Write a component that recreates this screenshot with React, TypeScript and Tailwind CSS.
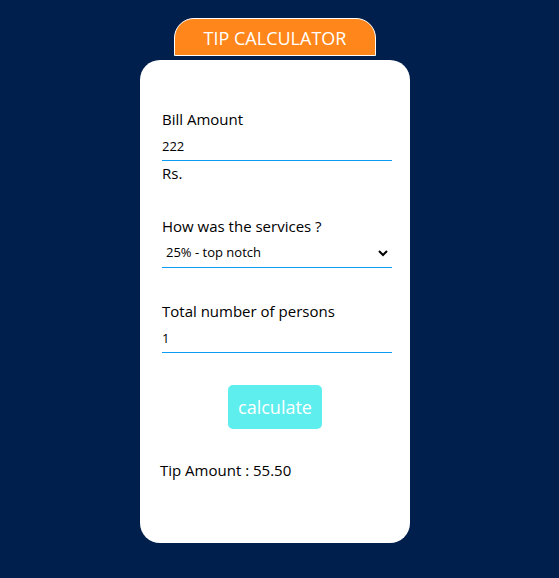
import { useState } from "react";
import type { FormEvent } from "react";

const font = "font-['Open_Sans','Noto_Sans',sans-serif]";
const field =
  "block h-[29px] w-full rounded-none border-0 border-b border-[#0a9bf5] bg-white text-[13px] text-black outline-none";
const label = "block text-[15px] leading-[25px]";

export default function App() {
  const [bill, setBill] = useState("222");
  const [rate, setRate] = useState("0.25");
  const [people, setPeople] = useState("1");
  const [tip, setTip] = useState("55.50");

  const calculate = (event: FormEvent) => {
    event.preventDefault();
    const share = (Number(bill) * Number(rate)) / Math.max(1, Number(people));
    setTip(share.toFixed(2));
  };

  return (
    <main className={`flex min-h-screen flex-col items-center bg-[#001f4d] pt-[18px] pr-[9px] pb-8 text-black ${font}`}>
      <h1 className="mb-1 flex h-[38px] w-[202px] items-center justify-center rounded-t-[20px] border border-white bg-[#ff861a] pt-0.5 text-lg font-normal text-white">
        TIP CALCULATOR
      </h1>
      <form
        onSubmit={calculate}
        className="flex w-[270px] flex-col rounded-[20px] bg-white px-5 pt-[47px] pb-15"
      >
        <div className="ml-0.5 -mr-0.5">
          <label htmlFor="bill" className={label}>Bill Amount</label>
          <input id="bill" inputMode="decimal" className={field} value={bill} onChange={(e) => setBill(e.target.value)} />
          <p className={label}>Rs.</p>
        </div>
        <div className="mt-7 ml-0.5 -mr-0.5">
          <label htmlFor="service" className={label}>How was the services ?</label>
          <div className="relative">
            <select id="service" className={`${field} appearance-none pl-1`} value={rate} onChange={(e) => setRate(e.target.value)}>
              <option value="0.25">25% - top notch</option>
              <option value="0.2">20% - good</option>
              <option value="0.15">15% - okay</option>
              <option value="0.1">10% - bad</option>
            </select>
            <svg className="pointer-events-none absolute top-2.5 right-1 h-2 w-2.5" viewBox="0 0 10 8" fill="none" stroke="black" strokeWidth="2" aria-hidden="true">
              <path d="M1 2l4 4 4-4" />
            </svg>
          </div>
        </div>
        <div className="mt-[31px] ml-0.5 -mr-0.5">
          <label htmlFor="people" className={label}>Total number of persons</label>
          <input id="people" inputMode="numeric" className={field} value={people} onChange={(e) => setPeople(e.target.value)} />
        </div>
        <button type="submit" className="mt-8 h-11 w-[94px] self-center rounded-[5px] bg-[#5eeeee] text-lg text-white">
          calculate
        </button>
        <output className={`${label} mt-[29px]`}>Tip Amount : {tip}</output>
      </form>
    </main>
  );
}
